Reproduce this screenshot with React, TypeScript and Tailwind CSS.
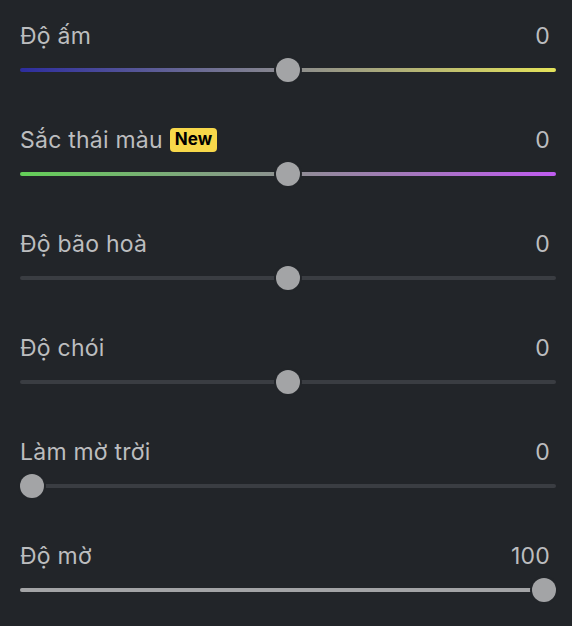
import React from 'react';

type SliderRow = {
  label: string;
  value: number;
  min: number;
  max: number;
  badge?: boolean;
  track: string;
  fill?: boolean;
};

const ROWS: SliderRow[] = [
  {
    label: 'Độ ấm',
    value: 0,
    min: -100,
    max: 100,
    track: 'bg-[linear-gradient(to_right,#2d2d9e,#8a8a8e_50%,#e4e35a)]',
  },
  {
    label: 'Sắc thái màu',
    value: 0,
    min: -100,
    max: 100,
    badge: true,
    track: 'bg-[linear-gradient(to_right,#64d058,#8e8f92_50%,#c05cf0)]',
  },
  { label: 'Độ bão hoà', value: 0, min: -100, max: 100, track: 'bg-[#3a3d42]' },
  { label: 'Độ chói', value: 0, min: -100, max: 100, track: 'bg-[#3a3d42]' },
  { label: 'Làm mờ trời', value: 0, min: 0, max: 100, track: 'bg-[#3a3d42]', fill: true },
  { label: 'Độ mờ', value: 100, min: 0, max: 100, track: 'bg-[#3a3d42]', fill: true },
];

const Slider: React.FC<{ row: SliderRow }> = ({ row }) => {
  const pct = (row.value - row.min) / (row.max - row.min);
  return (
    <div className="relative h-6 w-full">
      <div className={`absolute left-0 right-0 top-[10px] h-1 rounded-full ${row.track}`} />
      {row.fill && (
        <div
          className="absolute left-0 top-[10px] h-1 rounded-full bg-[#a3a4a6]"
          style={{ width: `calc(${pct} * (100% - 24px) + 12px)` }}
        />
      )}
      <div
        className="absolute top-0 h-6 w-6 rounded-full bg-[#a3a4a6] shadow-[0_0_0_2px_#222529]"
        style={{ left: `calc(${pct} * (100% - 24px))` }}
      />
    </div>
  );
};

export default function App() {
  return (
    <div className="min-h-[626px] w-[572px] bg-[#222529] pl-5 pr-4 pt-[22px] font-['Inter',sans-serif]">
      {ROWS.map((row) => (
        <div key={row.label} className="pb-[44px]">
          <div className="flex h-7 items-center justify-between text-[23px] tracking-[0.01em] text-[#bcbdbf]">
            <div className="flex items-center gap-[7px]">
              <span>{row.label}</span>
              {row.badge && (
                <span className="flex h-6 items-center rounded bg-[#f7d84a] px-[5px] text-[17px] font-bold tracking-normal text-black">
                  New
                </span>
              )}
            </div>
            <span className="mr-1.5">{row.value}</span>
          </div>
          <div className="mt-2">
            <Slider row={row} />
          </div>
        </div>
      ))}
    </div>
  );
}
